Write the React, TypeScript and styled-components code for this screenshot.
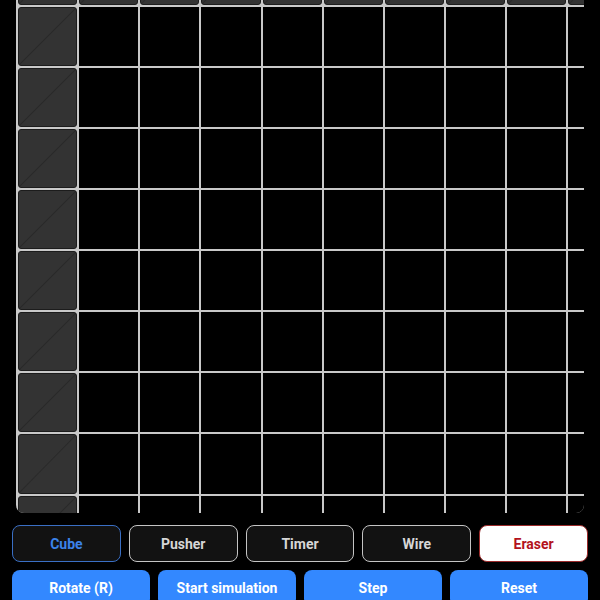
import React from "react";
import styled, { createGlobalStyle } from "styled-components";

const Global = createGlobalStyle`
  html, body { margin: 0; padding: 0; background: #000; }
  body { font-family: Roboto, "Liberation Sans", Arial, sans-serif; }
  * { box-sizing: border-box; }
`;

const Page = styled.div`
  padding: 0 12px;
  background: #000;
  min-height: 100vh;
`;

const Board = styled.div`
  margin: 0 4px;
  height: 513px;
  overflow: hidden;
  border-radius: 0 0 8px 8px;
  background: #000;
`;

const Grid = styled.div`
  display: grid;
  grid-template-columns: repeat(10, 59.14px);
  grid-auto-rows: 59.14px;
  gap: 2px;
  padding: 2px;
  width: max-content;
  background: #c9c9c9;
  margin-top: -56.6px;
`;

const Cell = styled.div<{ $cube: boolean }>`
  background: ${(p) =>
    p.$cube
      ? "linear-gradient(to bottom right, transparent calc(50% - 1px), #292929 50%, transparent calc(50% + 1px)), #333"
      : "#000"};
  border: ${(p) => (p.$cube ? "1px solid #1c1c1c" : "none")};
  border-radius: ${(p) => (p.$cube ? "3px" : "0")};
`;

const ToolRow = styled.div`
  display: grid;
  grid-template-columns: repeat(5, 1fr);
  gap: 8px;
  margin-top: 12px;
`;

const ActionRow = styled.div`
  display: grid;
  grid-template-columns: repeat(4, 1fr);
  gap: 8px;
  margin-top: 8px;
`;

type Variant = "selected" | "normal" | "danger";

const ToolButton = styled.button<{ $variant: Variant }>`
  height: 37px;
  border-radius: 8px;
  font-family: Roboto, "Liberation Sans", Arial, sans-serif;
  font-weight: 700;
  font-size: 14px;
  cursor: pointer;
  background: ${(p) => (p.$variant === "danger" ? "#ffffff" : "#121212")};
  color: ${(p) =>
    p.$variant === "selected" ? "#3b82ea" : p.$variant === "danger" ? "#b3121c" : "#d6d6d6"};
  border: 1px solid
    ${(p) =>
      p.$variant === "selected" ? "#3a6fc4" : p.$variant === "danger" ? "#9a2a2a" : "#c4c4c4"};
`;

const ActionButton = styled.button`
  height: 37px;
  border: none;
  border-radius: 8px;
  background: #3388ff;
  color: #fff;
  font-family: Roboto, "Liberation Sans", Arial, sans-serif;
  font-weight: 700;
  font-size: 14px;
  cursor: pointer;
  padding-bottom: 2px;
`;

const tools: { label: string; variant: Variant }[] = [
  { label: "Cube", variant: "selected" },
  { label: "Pusher", variant: "normal" },
  { label: "Timer", variant: "normal" },
  { label: "Wire", variant: "normal" },
  { label: "Eraser", variant: "danger" },
];

const actions = ["Rotate (R)", "Start simulation", "Step", "Reset"];

export default function App() {
  const cells = [];
  for (let r = 0; r < 10; r++) {
    for (let c = 0; c < 10; c++) {
      cells.push(<Cell key={`${r}-${c}`} $cube={r === 0 || c === 0} />);
    }
  }
  return (
    <>
      <Global />
      <Page>
        <Board>
          <Grid>{cells}</Grid>
        </Board>
        <ToolRow>
          {tools.map((t) => (
            <ToolButton key={t.label} $variant={t.variant}>
              {t.label}
            </ToolButton>
          ))}
        </ToolRow>
        <ActionRow>
          {actions.map((a) => (
            <ActionButton key={a}>{a}</ActionButton>
          ))}
        </ActionRow>
      </Page>
    </>
  );
}
